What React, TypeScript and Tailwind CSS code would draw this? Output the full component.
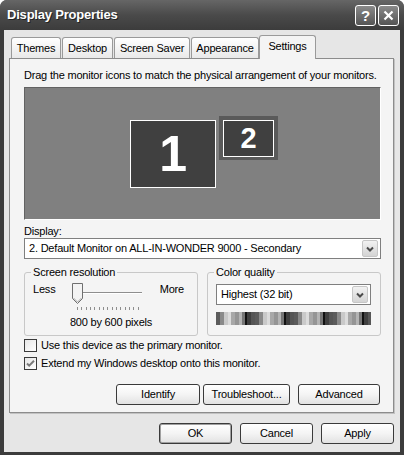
import React from "react";

const tabs = [
    { label: "Themes", w: "w-[50px]" },
    { label: "Desktop", w: "w-[51px]" },
    { label: "Screen Saver", w: "w-[76px]" },
    { label: "Appearance", w: "w-[68px]" },
];

// one cycle of the colour quality strip, repeated four times
const stripeCycle = [
    "w-[4px] bg-[#5b5b5b]",
    "w-[4px] bg-[#8a8a8a]",
    "w-[4px] bg-[#c9c9c9]",
    "w-[3px] bg-[#dcdcdc]",
    "w-[4px] bg-[#a8a8a8]",
    "w-[4px] bg-[#959595]",
    "w-[3px] bg-[#b4b4b4]",
    "w-[3px] bg-[#767676]",
    "w-[2px] bg-[#111111]",
    "w-[4px] bg-[#3f3f3f]",
    "w-[4px] bg-[#555555]",
];

function ComboArrow() {
    return (
        <div className="w-[16px] h-[17px] rounded-[2px] border border-[#c6c6c6] bg-linear-to-b from-[#f2f2f2] to-[#d4d4d4] flex items-center justify-center">
            <svg width="8" height="6" viewBox="0 0 8 6">
                <path d="M1 1.5 L4 4.5 L7 1.5" fill="none" stroke="#4a4a4a" strokeWidth="2" />
            </svg>
        </div>
    );
}

function XpButton({ label, className }: { label: string; className: string }) {
    return (
        <div className={`h-[21px] rounded-[3px] border border-[#3a3a3a] bg-linear-to-b from-white via-[#f4f4f4] to-[#e2e2e2] flex items-center justify-center leading-[13px] ${className}`}>
            {label}
        </div>
    );
}

function Checkbox({ checked, label }: { checked: boolean; label: string }) {
    return (
        <div className="flex items-center h-[13px]">
            <div className="w-[13px] h-[13px] border border-[#3a3a3a] bg-linear-to-br from-[#e6e6e6] to-white flex items-center justify-center">
                {checked && (
                    <svg width="9" height="9" viewBox="0 0 9 9">
                        <path d="M1 4.5 L3.2 6.7 L8 1.8" fill="none" stroke="#7a7a7a" strokeWidth="2" />
                    </svg>
                )}
            </div>
            <span className="ml-[4px] leading-[13px]">{label}</span>
        </div>
    );
}

export default function App() {
    return (
        <div className="w-[404px] h-[455px] bg-white [font-family:'Liberation_Sans',Arial,sans-serif] text-[11px] tracking-[-0.2px] text-black">
            <div className="w-full h-full flex flex-col bg-[#3c3c3c] rounded-t-[7px] overflow-hidden">
                {/* title bar */}
                <div className="h-[30px] flex items-center justify-between pl-[7px] pr-[5px] bg-linear-to-b from-[#666666] via-[#4a4a4a] to-[#3c3c3c]">
                    <span className="text-white font-bold text-[13px] [text-shadow:1px_1px_0_#222]">Display Properties</span>
                    <div className="flex gap-[2px]">
                        <div className="w-[21px] h-[21px] rounded-[3px] border border-white bg-linear-to-b from-[#8a8a8a] to-[#555555] flex items-center justify-center text-white font-bold text-[15px] leading-none">
                            ?
                        </div>
                        <div className="w-[21px] h-[21px] rounded-[3px] border border-white bg-linear-to-b from-[#8a8a8a] to-[#555555] flex items-center justify-center">
                            <svg width="11" height="11" viewBox="0 0 11 11">
                                <path d="M1.5 1.5 L9.5 9.5 M9.5 1.5 L1.5 9.5" stroke="white" strokeWidth="2.2" />
                            </svg>
                        </div>
                    </div>
                </div>

                {/* dialog body */}
                <div className="flex-1 mx-[4px] mb-[3px] bg-[#e6e6e6] flex flex-col">
                    <div className="mt-[5px] pl-[7px] h-[24px] flex items-end gap-[1px]">
                        {tabs.map((t) => (
                            <div
                                key={t.label}
                                className={`h-[21px] mb-px border border-b-0 border-[#9a9a9a] rounded-t-[3px] bg-linear-to-b from-white to-[#e9e9e9] text-center leading-[20px] ${t.w}`}
                            >
                                {t.label}
                            </div>
                        ))}
                        <div className="relative z-10 -ml-px w-[57px] h-[24px] border border-b-0 border-[#9a9a9a] rounded-t-[3px] bg-[#f4f4f4] text-center pt-[3px] leading-[14px]">
                            Settings
                        </div>
                    </div>

                    {/* tab page */}
                    <div className="-mt-px ml-[5px] w-[385px] h-[355px] border border-[#8c8c8c] bg-[#f4f4f4] shadow-[1px_1px_0_#c2c2c2] flex flex-col pl-[14px]">
                        <div className="mt-[10px] leading-[13px]">
                            Drag the monitor icons to match the physical arrangement of your monitors.
                        </div>

                        {/* monitor arrangement canvas */}
                        <div className="relative mt-[5px] w-[357px] h-[133px] bg-[#808080] border border-t-[#626262] border-l-[#626262] border-r-white border-b-white">
                            <div className="absolute left-[105px] top-[32px] w-[86px] h-[68px] bg-[#404040] border border-white flex items-center justify-center text-white font-bold text-[50px] leading-none">
                                1
                            </div>
                            <div className="absolute left-[194px] top-[28px] w-[59px] h-[44px] bg-[#5a5a5a] pl-[4px] pt-[4px]">
                                <div className="w-[51px] h-[37px] bg-[#404040] border border-white flex items-center justify-center text-white font-bold text-[29px] leading-none">
                                    2
                                </div>
                            </div>
                        </div>

                        <div className="mt-[5px] leading-[13px]">Display:</div>
                        <div className="w-[357px] h-[21px] border border-[#7f7f7f] bg-white flex items-center justify-between pl-[4px] pr-[2px]">
                            <span className="leading-[13px]">2. Default Monitor on ALL-IN-WONDER 9000 - Secondary</span>
                            <ComboArrow />
                        </div>

                        <div className="mt-[13px] flex gap-[9px]">
                            {/* screen resolution */}
                            <div className="relative w-[174px] h-[64px] border border-[#c8c8c8] rounded-[3px] pl-[8px] pr-[13px] pt-[10px]">
                                <span className="absolute -top-[7px] left-[6px] px-[2px] bg-[#f4f4f4] leading-[13px]">Screen resolution</span>
                                <div className="flex items-start">
                                    <span className="w-[39px] leading-[13px]">Less</span>
                                    <div className="relative w-[70px] h-[22px]">
                                        <div className="absolute left-[5px] right-0 top-[9px] h-[2px] border-t border-[#8e8e8e] border-b border-b-white" />
                                        <svg className="absolute left-0 top-0" width="12" height="22" viewBox="0 0 12 22">
                                            <path d="M0.5 0.5 H10.5 V15.5 L5.5 20.5 L0.5 15.5 Z" fill="#f3f3f3" stroke="#6f6f6f" />
                                            <path d="M1.5 15 L5.5 19 L9.5 15" fill="none" stroke="#a8a8a8" />
                                        </svg>
                                    </div>
                                    <span className="ml-auto leading-[13px]">More</span>
                                </div>
                                <div className="ml-[44px] mt-[2px] w-[62px] h-[3px] flex justify-between">
                                    {Array.from({ length: 15 }).map((_, i) => (
                                        <div key={i} className="w-px h-[3px] bg-[#8e8e8e]" />
                                    ))}
                                </div>
                                <div className="mt-[6px] -ml-[8px] -mr-[13px] text-center leading-[13px]">800 by 600 pixels</div>
                            </div>

                            {/* color quality */}
                            <div className="relative w-[174px] h-[64px] border border-[#c8c8c8] rounded-[3px] pl-[8px] pt-[11px]">
                                <span className="absolute -top-[7px] left-[6px] px-[2px] bg-[#f4f4f4] leading-[13px]">Color quality</span>
                                <div className="w-[155px] h-[21px] border border-[#7f7f7f] bg-white flex items-center justify-between pl-[4px] pr-[2px]">
                                    <span className="leading-[13px]">Highest (32 bit)</span>
                                    <ComboArrow />
                                </div>
                                <div className="mt-[7px] w-[155px] h-[13px] flex overflow-hidden">
                                    {[0, 1, 2, 3].map((c) =>
                                        stripeCycle.map((s, i) => <div key={`${c}-${i}`} className={`shrink-0 h-full ${s}`} />)
                                    )}
                                </div>
                            </div>
                        </div>

                        <div className="mt-[3px]">
                            <Checkbox checked={false} label="Use this device as the primary monitor." />
                        </div>
                        <div className="mt-[5px]">
                            <Checkbox checked={true} label="Extend my Windows desktop onto this monitor." />
                        </div>

                        <div className="mt-[14px] w-[356px] flex justify-end">
                            <XpButton label="Identify" className="w-[84px] mr-[3px]" />
                            <XpButton label="Troubleshoot..." className="w-[87px] mr-[8px]" />
                            <XpButton label="Advanced" className="w-[82px]" />
                        </div>
                    </div>

                    <div className="mt-[10px] pr-[6px] flex justify-end gap-[8px]">
                        <XpButton label="OK" className="w-[73px] shadow-[inset_0_0_0_1px_#a0a0a0]" />
                        <XpButton label="Cancel" className="w-[73px]" />
                        <XpButton label="Apply" className="w-[73px]" />
                    </div>
                </div>
            </div>
        </div>
    );
}
